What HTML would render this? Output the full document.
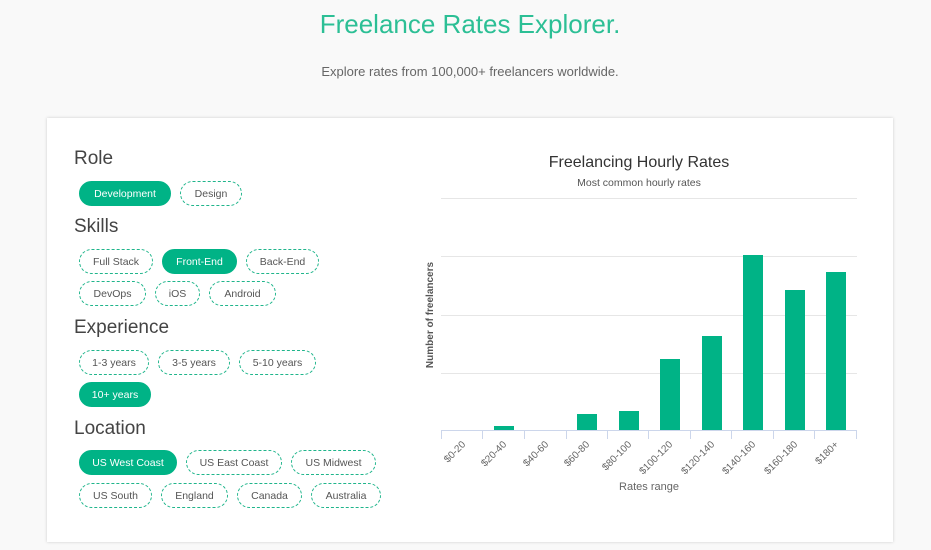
<!DOCTYPE html>
<html><head><style>
body{margin:0;width:931px;height:550px;background:#f9f9f9;font-family:"Liberation Sans",sans-serif;position:relative;overflow:hidden}
.t{position:absolute;left:0;width:940px;text-align:center}
.card{position:absolute;left:47px;top:118px;width:846px;height:424px;background:#fff;box-shadow:0 0 3px rgba(0,0,0,.18)}
h2{position:absolute;margin:0;font-weight:normal;font-size:19px;color:#444;left:74px}
.p{position:absolute;line-height:24px;border:1px dashed #1fb58b;border-radius:13px;font-size:10.5px;color:#555;text-align:center;box-sizing:border-box;height:25px}
.p.on{background:#00b386;border:1px solid #00b386;color:#fff}
</style></head><body>
<div class="t" style="top:9px;font-size:26px;color:#2cbf95;font-weight:300">Freelance Rates Explorer.</div>
<div class="t" style="top:64px;font-size:13px;color:#666">Explore rates from 100,000+ freelancers worldwide.</div>
<div class="card"></div>
<h2 style="top:148px">Role</h2>
<h2 style="top:216px">Skills</h2>
<h2 style="top:317px">Experience</h2>
<h2 style="top:418px">Location</h2>
<div class="p on" style="left:79px;top:181px;width:92px">Development</div>
<div class="p" style="left:180px;top:181px;width:62px">Design</div>
<div class="p" style="left:79px;top:249px;width:74px">Full Stack</div>
<div class="p on" style="left:162px;top:249px;width:75px">Front-End</div>
<div class="p" style="left:246px;top:249px;width:73px">Back-End</div>
<div class="p" style="left:79px;top:281px;width:67px">DevOps</div>
<div class="p" style="left:155px;top:281px;width:45px">iOS</div>
<div class="p" style="left:209px;top:281px;width:67px">Android</div>
<div class="p" style="left:79px;top:350px;width:70px">1-3 years</div>
<div class="p" style="left:158px;top:350px;width:72px">3-5 years</div>
<div class="p" style="left:239px;top:350px;width:77px">5-10 years</div>
<div class="p on" style="left:79px;top:382px;width:72px">10+ years</div>
<div class="p on" style="left:79px;top:450px;width:98px">US West Coast</div>
<div class="p" style="left:186px;top:450px;width:96px">US East Coast</div>
<div class="p" style="left:291px;top:450px;width:85px">US Midwest</div>
<div class="p" style="left:79px;top:483px;width:73px">US South</div>
<div class="p" style="left:161px;top:483px;width:67px">England</div>
<div class="p" style="left:237px;top:483px;width:65px">Canada</div>
<div class="p" style="left:311px;top:483px;width:70px">Australia</div>
<svg style="position:absolute;left:0;top:0" width="931" height="550" font-family="Liberation Sans, sans-serif">
<text x="639" y="167" text-anchor="middle" font-size="16" fill="#333">Freelancing Hourly Rates</text>
<text x="639" y="186" text-anchor="middle" font-size="10.5" fill="#555">Most common hourly rates</text>
<g stroke="#e6e6e6" stroke-width="1">
<line x1="441" x2="857" y1="198.5" y2="198.5"/><line x1="441" x2="857" y1="256.5" y2="256.5"/><line x1="441" x2="857" y1="315.5" y2="315.5"/><line x1="441" x2="857" y1="373.5" y2="373.5"/></g>
<g fill="#00b386">
<rect x="494" y="426" width="20" height="5"/>
<rect x="577" y="414" width="20" height="17"/>
<rect x="619" y="411" width="20" height="20"/>
<rect x="660" y="359" width="20" height="72"/>
<rect x="702" y="336" width="20" height="95"/>
<rect x="743" y="255" width="20" height="176"/>
<rect x="785" y="290" width="20" height="141"/>
<rect x="826" y="272" width="20" height="159"/>
</g>
<g stroke="#ccd6eb" stroke-width="1"><line x1="441" x2="857" y1="430.5" y2="430.5"/>
<line x1="441.5" x2="441.5" y1="430" y2="439"/><line x1="482.5" x2="482.5" y1="430" y2="439"/><line x1="524.5" x2="524.5" y1="430" y2="439"/><line x1="566.5" x2="566.5" y1="430" y2="439"/><line x1="607.5" x2="607.5" y1="430" y2="439"/><line x1="648.5" x2="648.5" y1="430" y2="439"/><line x1="690.5" x2="690.5" y1="430" y2="439"/><line x1="731.5" x2="731.5" y1="430" y2="439"/><line x1="773.5" x2="773.5" y1="430" y2="439"/><line x1="814.5" x2="814.5" y1="430" y2="439"/><line x1="856.5" x2="856.5" y1="430" y2="439"/></g>
<g font-size="10" fill="#666" text-anchor="end">
<text transform="translate(466,445) rotate(-45)">$0-20</text>
<text transform="translate(507,445) rotate(-45)">$20-40</text>
<text transform="translate(549,445) rotate(-45)">$40-60</text>
<text transform="translate(590,445) rotate(-45)">$60-80</text>
<text transform="translate(632,445) rotate(-45)">$80-100</text>
<text transform="translate(673,445) rotate(-45)">$100-120</text>
<text transform="translate(715,445) rotate(-45)">$120-140</text>
<text transform="translate(756,445) rotate(-45)">$140-160</text>
<text transform="translate(798,445) rotate(-45)">$160-180</text>
<text transform="translate(839,445) rotate(-45)">$180+</text>
</g>
<text x="649" y="490" text-anchor="middle" font-size="11" fill="#666">Rates range</text>
<text transform="translate(433,315) rotate(-90)" text-anchor="middle" font-size="10" font-weight="bold" fill="#555">Number of freelancers</text>
</svg>
</body></html>
